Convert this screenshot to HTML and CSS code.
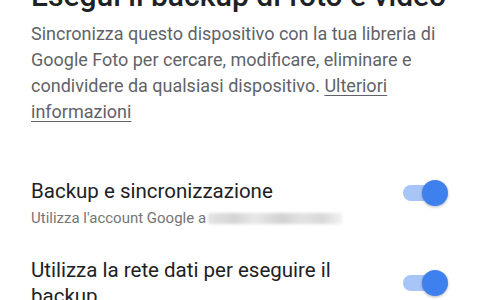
FILE: index.html
```html
<!DOCTYPE html>
<html lang="it">
<head>
<meta charset="utf-8">
<link rel="stylesheet" href="styles.css">
</head>
<body>
<main class="page">
  <h1 class="title">Esegui il backup di foto e video</h1>
  <p class="desc">Sincronizza questo dispositivo con la tua libreria di Google Foto per cercare, modificare, eliminare e condividere da qualsiasi dispositivo. <a class="link" href="#">Ulteriori informazioni</a></p>
  <div class="row row-first">
    <div class="row-text">
      <div class="row-title">Backup e sincronizzazione</div>
      <div class="row-sub">Utilizza l'account Google <span class="blur">a<span class="blur-box"></span></span></div>
    </div>
    <div class="switch"><span class="track"></span><span class="thumb"></span></div>
  </div>
  <div class="row row-second">
    <div class="row-text">
      <div class="row-title">Utilizza la rete dati per eseguire il backup</div>
    </div>
    <div class="switch"><span class="track"></span><span class="thumb"></span></div>
  </div>
</main>
</body>
</html>
```
FILE: styles.css
```css
html, body {
  margin: 0;
  background: #ffffff;
}
body {
  font-family: Roboto, "Noto Sans", sans-serif;
  overflow: hidden;
  height: 300px;
}
.page {
  padding: 0 31px;
}
.title {
  margin: -22px 0 0;
  font-size: 30px;
  line-height: 36px;
  font-weight: 500;
  color: #202124;
  white-space: nowrap;
}
.desc {
  margin: 7px 0 0;
  font-size: 18px;
  line-height: 26px;
  color: #5f6368;
}
.link {
  color: #5f6368;
  text-decoration: underline;
  text-underline-offset: 3px;
}
.row {
  display: flex;
  align-items: flex-start;
  justify-content: space-between;
  gap: 20px;
}
.row-first {
  margin-top: 53px;
}
.row-second {
  margin-top: 29px;
}
.row-text {
  flex: 1;
  min-width: 0;
}
.row-title {
  font-size: 20.5px;
  line-height: 26px;
  color: #202124;
}
.row-second .row-title {
  padding-right: 50px;
}
.row-sub {
  font-size: 15px;
  line-height: 20px;
  color: #757575;
  margin-top: 4px;
  white-space: nowrap;
}
.blur-box {
  display: inline-block;
  width: 134px;
  height: 11px;
  vertical-align: -1px;
  margin-left: 2px;
  background: linear-gradient(90deg, #e4e4e4 0%, #d4d4d4 20%, #e8e8e8 35%, #d2d2d2 55%, #e2e2e2 70%, #d8d8d8 85%, #f2f2f2 100%);
  filter: blur(1.5px);
}
.switch {
  position: relative;
  width: 46px;
  height: 26px;
  flex: none;
  margin-right: 1px;
  margin-top: 2px;
}
.row-second .switch {
  margin-top: 13px;
}
.track {
  position: absolute;
  left: 1px;
  top: 5px;
  width: 40px;
  height: 16px;
  border-radius: 8px;
  background: #a8c5f7;
}
.thumb {
  position: absolute;
  right: 0;
  top: 0;
  width: 26px;
  height: 26px;
  border-radius: 50%;
  background: #3d80ee;
  box-shadow: 0 1px 3px rgba(0,0,0,0.3);
}
```
